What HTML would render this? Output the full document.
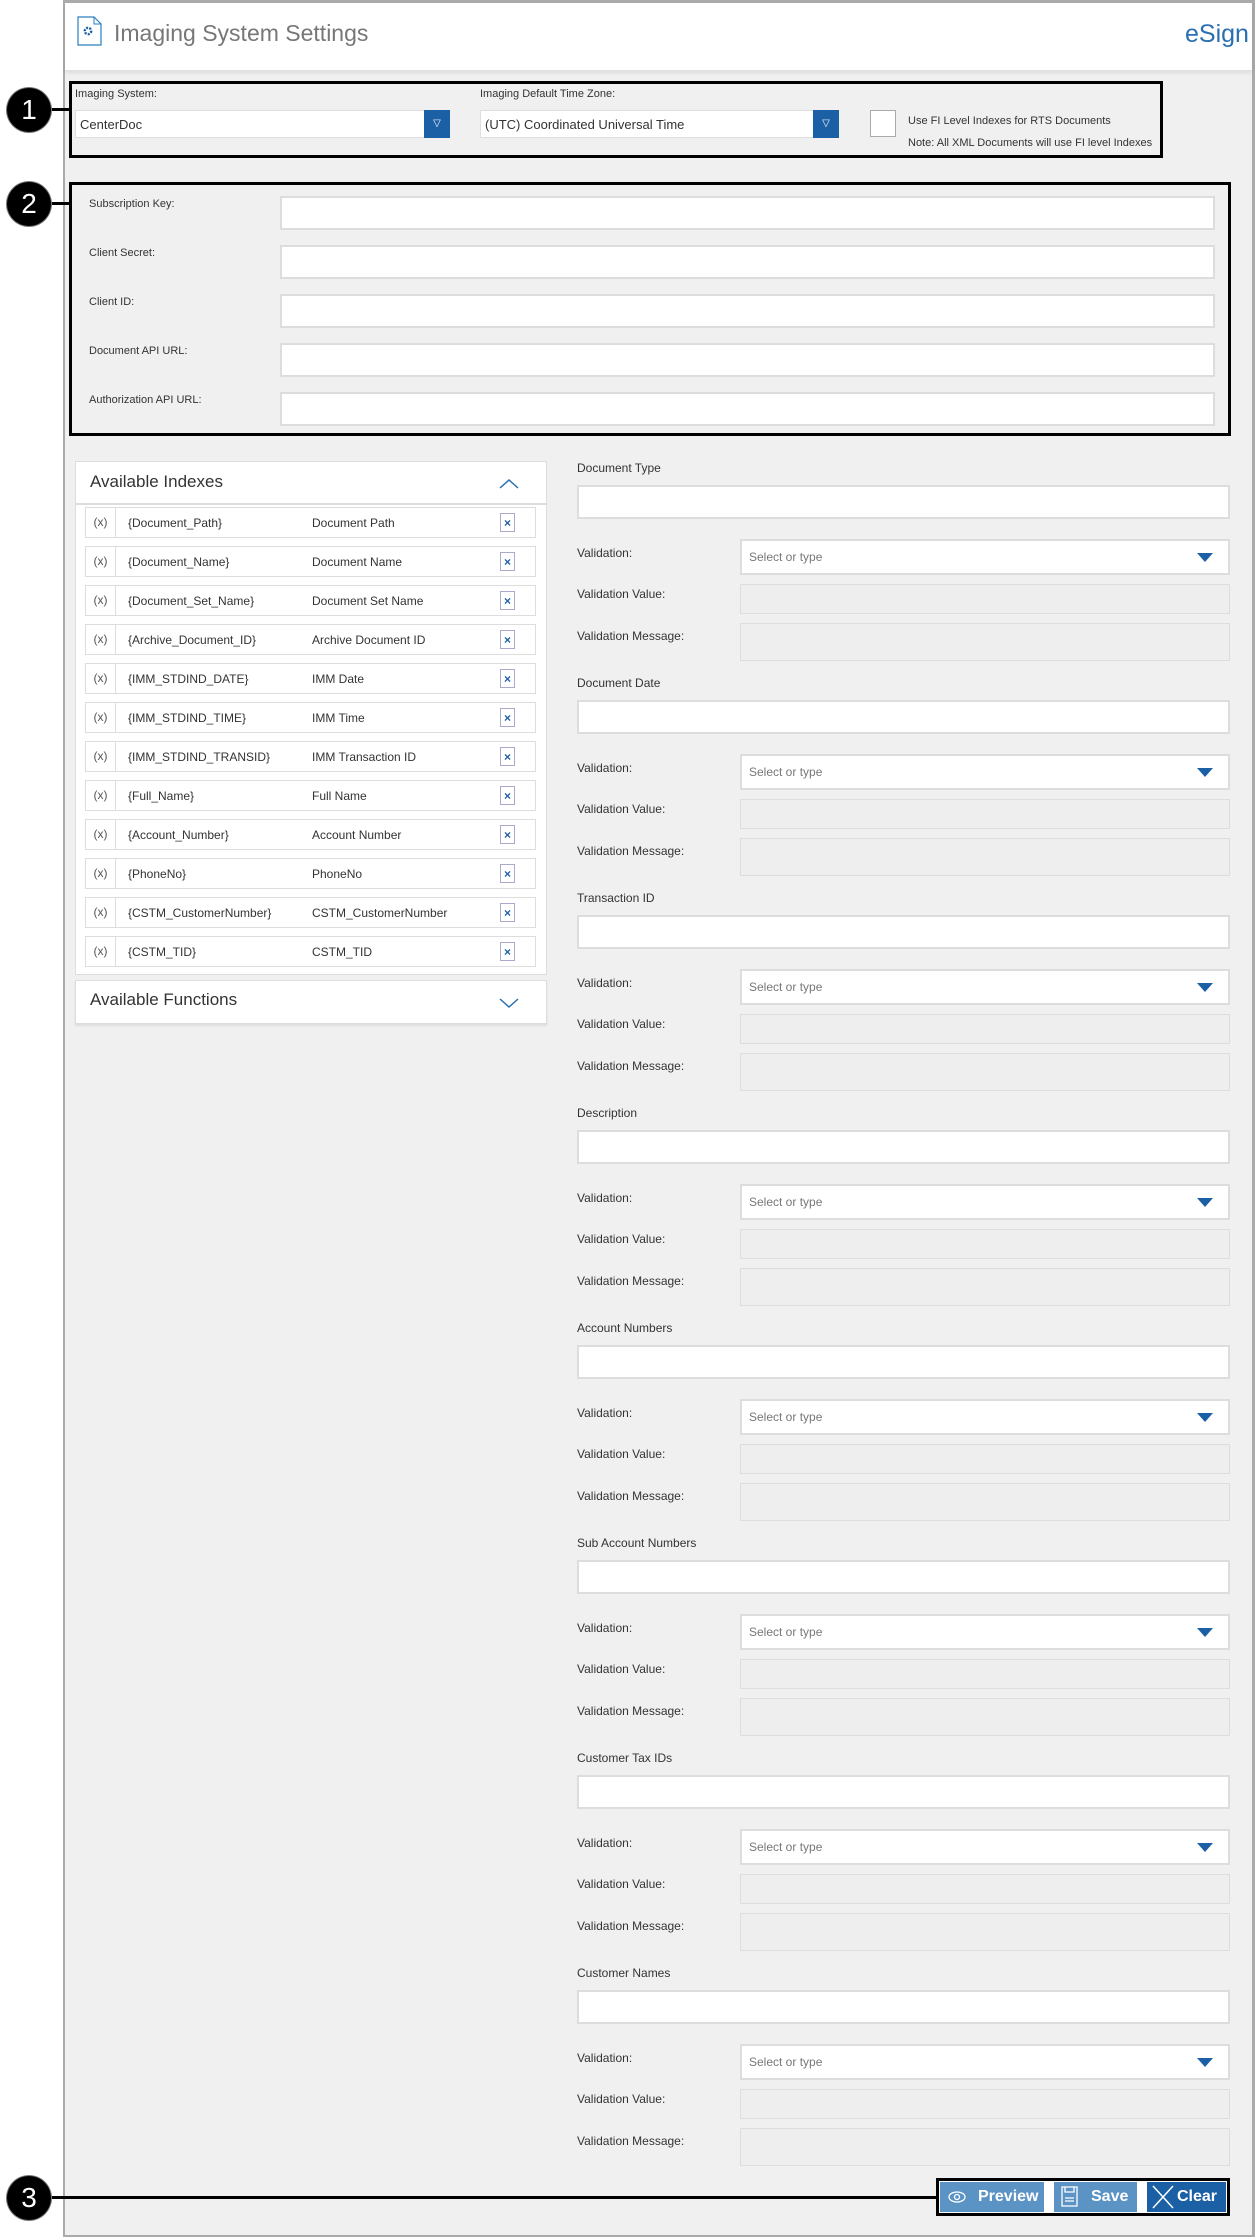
<!DOCTYPE html>
<html><head><meta charset="utf-8"><style>
*{box-sizing:border-box;margin:0;padding:0}
body{width:1255px;height:2237px;background:#fff;font-family:"Liberation Sans",sans-serif;position:relative;overflow:hidden;color:#333}
.a{position:absolute}
.page{left:63px;top:0;width:1192px;height:2237px;background:#f0f0f0;border:2px solid #aaa;border-right:3px solid #aaa;border-top:3px solid #aaa}
.hdr{left:65px;top:3px;width:1187px;height:67px;background:#fff;box-shadow:0 3px 4px rgba(0,0,0,.08)}
.lbl{font-size:12px;color:#333;white-space:nowrap}
.inp{background:#fff;border:2px solid #ddd}
.dis{background:#eee;border:1px solid #ddd}
.box{border:3px solid #000}
.circ{width:44px;height:44px;border-radius:50%;background:#000;color:#fff;font-size:28px;text-align:center;line-height:44px;box-shadow:0 0 0 1px #777}
.ln{height:3px;background:#000}
.row{left:85px;width:451px;height:31px;background:#fff;border:1px solid #ddd;font-size:12px;color:#333}
.row span{position:absolute;top:8px;white-space:nowrap}
.row .c{left:0;top:0;width:30px;height:29px;border-right:1px solid #ddd;text-align:center;line-height:29px;color:#555}
.ic{position:absolute;left:414px;top:5px;width:15px;height:19px;border:1px solid #aac;background:#fff;color:#1d5fa3;font-size:12px;font-weight:bold;text-align:center;line-height:19px}
.sec{left:577px;width:653px;height:200px}
.btn{top:2182px;height:30px;color:#fff;font-size:16px;line-height:30px;font-weight:bold}
</style></head><body>
<div class="a page"></div>
<div class="a hdr"></div>
<svg class="a" style="left:77px;top:16px" width="26" height="30" viewBox="0 0 26 30"><path d="M1 1H17L24 8V29H1Z" fill="#fff" stroke="#2a7fc0" stroke-width="1.2"/><path d="M17 1V8H24" fill="none" stroke="#2a7fc0" stroke-width="1"/><circle cx="11" cy="15" r="3.2" fill="none" stroke="#1d5fa3" stroke-width="2.4" stroke-dasharray="2 1.2"/></svg>
<div class="a" style="left:114px;top:20px;font-size:23px;color:#777">Imaging System Settings</div>
<div class="a" style="left:1185px;top:20px;font-size:25px;color:#2a6fb0">eSign</div>

<div class="a box" style="left:69px;top:81px;width:1094px;height:77px"></div>
<div class="a ln" style="left:40px;top:108px;width:30px"></div>
<div class="a circ" style="left:7px;top:88px">1</div>
<div class="a lbl" style="left:75px;top:88px;font-size:11px">Imaging System:</div>
<div class="a inp" style="left:75px;top:110px;width:375px;height:28px;border-width:1px"></div>
<div class="a lbl" style="left:80px;top:117px;font-size:13px">CenterDoc</div>
<div class="a" style="left:424px;top:110px;width:26px;height:28px;background:#1b5fa5;color:#fff;font-size:10px;text-align:center;line-height:28px">▽</div>
<div class="a lbl" style="left:480px;top:88px;font-size:11px">Imaging Default Time Zone:</div>
<div class="a inp" style="left:480px;top:110px;width:359px;height:28px;border-width:1px"></div>
<div class="a lbl" style="left:485px;top:117px;font-size:13px">(UTC) Coordinated Universal Time</div>
<div class="a" style="left:813px;top:110px;width:26px;height:28px;background:#1b5fa5;color:#fff;font-size:10px;text-align:center;line-height:28px">▽</div>
<div class="a inp" style="left:870px;top:110px;width:26px;height:27px;border:1px solid #aaa"></div>
<div class="a lbl" style="left:908px;top:115px;font-size:11px">Use FI Level Indexes for RTS Documents</div>
<div class="a lbl" style="left:908px;top:137px;font-size:11px">Note: All XML Documents will use FI level Indexes</div>

<div class="a box" style="left:69px;top:182px;width:1162px;height:254px"></div>
<div class="a ln" style="left:40px;top:202px;width:30px"></div>
<div class="a circ" style="left:7px;top:182px">2</div>
<div class="a lbl" style="left:89px;top:198px;font-size:11px">Subscription Key:</div>
<div class="a lbl" style="left:89px;top:247px;font-size:11px">Client Secret:</div>
<div class="a lbl" style="left:89px;top:296px;font-size:11px">Client ID:</div>
<div class="a lbl" style="left:89px;top:345px;font-size:11px">Document API URL:</div>
<div class="a lbl" style="left:89px;top:394px;font-size:11px">Authorization API URL:</div>
<div class="a inp" style="left:280px;top:196px;width:935px;height:34px"></div>
<div class="a inp" style="left:280px;top:245px;width:935px;height:34px"></div>
<div class="a inp" style="left:280px;top:294px;width:935px;height:34px"></div>
<div class="a inp" style="left:280px;top:343px;width:935px;height:34px"></div>
<div class="a inp" style="left:280px;top:392px;width:935px;height:34px"></div>

<div class="a" style="left:75px;top:461px;width:472px;height:514px;background:#fff;border:1px solid #ddd"></div>
<div class="a" style="left:75px;top:503px;width:472px;height:2px;background:#ddd"></div>
<div class="a" style="left:90px;top:472px;font-size:17px;color:#333">Available Indexes</div>
<svg class="a" style="left:499px;top:478px" width="20" height="12"><path d="M1 10L10 2L19 10" fill="none" stroke="#2a6fb0" stroke-width="1.5"/></svg>

<div class="a row" style="top:507px"><span class="c">(x)</span><span style="left:42px">{Document_Path}</span><span style="left:226px">Document Path</span><div class="ic">×</div></div>
<div class="a row" style="top:546px"><span class="c">(x)</span><span style="left:42px">{Document_Name}</span><span style="left:226px">Document Name</span><div class="ic">×</div></div>
<div class="a row" style="top:585px"><span class="c">(x)</span><span style="left:42px">{Document_Set_Name}</span><span style="left:226px">Document Set Name</span><div class="ic">×</div></div>
<div class="a row" style="top:624px"><span class="c">(x)</span><span style="left:42px">{Archive_Document_ID}</span><span style="left:226px">Archive Document ID</span><div class="ic">×</div></div>
<div class="a row" style="top:663px"><span class="c">(x)</span><span style="left:42px">{IMM_STDIND_DATE}</span><span style="left:226px">IMM Date</span><div class="ic">×</div></div>
<div class="a row" style="top:702px"><span class="c">(x)</span><span style="left:42px">{IMM_STDIND_TIME}</span><span style="left:226px">IMM Time</span><div class="ic">×</div></div>
<div class="a row" style="top:741px"><span class="c">(x)</span><span style="left:42px">{IMM_STDIND_TRANSID}</span><span style="left:226px">IMM Transaction ID</span><div class="ic">×</div></div>
<div class="a row" style="top:780px"><span class="c">(x)</span><span style="left:42px">{Full_Name}</span><span style="left:226px">Full Name</span><div class="ic">×</div></div>
<div class="a row" style="top:819px"><span class="c">(x)</span><span style="left:42px">{Account_Number}</span><span style="left:226px">Account Number</span><div class="ic">×</div></div>
<div class="a row" style="top:858px"><span class="c">(x)</span><span style="left:42px">{PhoneNo}</span><span style="left:226px">PhoneNo</span><div class="ic">×</div></div>
<div class="a row" style="top:897px"><span class="c">(x)</span><span style="left:42px">{CSTM_CustomerNumber}</span><span style="left:226px">CSTM_CustomerNumber</span><div class="ic">×</div></div>
<div class="a row" style="top:936px"><span class="c">(x)</span><span style="left:42px">{CSTM_TID}</span><span style="left:226px">CSTM_TID</span><div class="ic">×</div></div>

<div class="a" style="left:75px;top:980px;width:472px;height:44px;background:#fff;border:1px solid #ddd;box-shadow:0 2px 2px rgba(0,0,0,.08)"></div>
<div class="a" style="left:90px;top:990px;font-size:17px;color:#333">Available Functions</div>
<svg class="a" style="left:499px;top:997px" width="20" height="12"><path d="M1 2L10 10L19 2" fill="none" stroke="#2a6fb0" stroke-width="1.5"/></svg>

<div class="a sec" style="top:461px"><div class="a lbl" style="left:0;top:0">Document Type</div><div class="a inp" style="left:0;top:24px;width:653px;height:34px"></div><div class="a lbl" style="left:0;top:85px">Validation:</div><div class="a inp" style="left:163px;top:78px;width:490px;height:36px"></div><div class="a lbl" style="left:172px;top:89px;color:#777">Select or type</div><svg class="a" style="left:620px;top:92px" width="16" height="9"><path d="M0 0H16L8 9Z" fill="#1b5fa5"/></svg><div class="a lbl" style="left:0;top:126px">Validation Value:</div><div class="a dis" style="left:163px;top:123px;width:490px;height:30px"></div><div class="a lbl" style="left:0;top:168px">Validation Message:</div><div class="a dis" style="left:163px;top:162px;width:490px;height:38px"></div></div>
<div class="a sec" style="top:676px"><div class="a lbl" style="left:0;top:0">Document Date</div><div class="a inp" style="left:0;top:24px;width:653px;height:34px"></div><div class="a lbl" style="left:0;top:85px">Validation:</div><div class="a inp" style="left:163px;top:78px;width:490px;height:36px"></div><div class="a lbl" style="left:172px;top:89px;color:#777">Select or type</div><svg class="a" style="left:620px;top:92px" width="16" height="9"><path d="M0 0H16L8 9Z" fill="#1b5fa5"/></svg><div class="a lbl" style="left:0;top:126px">Validation Value:</div><div class="a dis" style="left:163px;top:123px;width:490px;height:30px"></div><div class="a lbl" style="left:0;top:168px">Validation Message:</div><div class="a dis" style="left:163px;top:162px;width:490px;height:38px"></div></div>
<div class="a sec" style="top:891px"><div class="a lbl" style="left:0;top:0">Transaction ID</div><div class="a inp" style="left:0;top:24px;width:653px;height:34px"></div><div class="a lbl" style="left:0;top:85px">Validation:</div><div class="a inp" style="left:163px;top:78px;width:490px;height:36px"></div><div class="a lbl" style="left:172px;top:89px;color:#777">Select or type</div><svg class="a" style="left:620px;top:92px" width="16" height="9"><path d="M0 0H16L8 9Z" fill="#1b5fa5"/></svg><div class="a lbl" style="left:0;top:126px">Validation Value:</div><div class="a dis" style="left:163px;top:123px;width:490px;height:30px"></div><div class="a lbl" style="left:0;top:168px">Validation Message:</div><div class="a dis" style="left:163px;top:162px;width:490px;height:38px"></div></div>
<div class="a sec" style="top:1106px"><div class="a lbl" style="left:0;top:0">Description</div><div class="a inp" style="left:0;top:24px;width:653px;height:34px"></div><div class="a lbl" style="left:0;top:85px">Validation:</div><div class="a inp" style="left:163px;top:78px;width:490px;height:36px"></div><div class="a lbl" style="left:172px;top:89px;color:#777">Select or type</div><svg class="a" style="left:620px;top:92px" width="16" height="9"><path d="M0 0H16L8 9Z" fill="#1b5fa5"/></svg><div class="a lbl" style="left:0;top:126px">Validation Value:</div><div class="a dis" style="left:163px;top:123px;width:490px;height:30px"></div><div class="a lbl" style="left:0;top:168px">Validation Message:</div><div class="a dis" style="left:163px;top:162px;width:490px;height:38px"></div></div>
<div class="a sec" style="top:1321px"><div class="a lbl" style="left:0;top:0">Account Numbers</div><div class="a inp" style="left:0;top:24px;width:653px;height:34px"></div><div class="a lbl" style="left:0;top:85px">Validation:</div><div class="a inp" style="left:163px;top:78px;width:490px;height:36px"></div><div class="a lbl" style="left:172px;top:89px;color:#777">Select or type</div><svg class="a" style="left:620px;top:92px" width="16" height="9"><path d="M0 0H16L8 9Z" fill="#1b5fa5"/></svg><div class="a lbl" style="left:0;top:126px">Validation Value:</div><div class="a dis" style="left:163px;top:123px;width:490px;height:30px"></div><div class="a lbl" style="left:0;top:168px">Validation Message:</div><div class="a dis" style="left:163px;top:162px;width:490px;height:38px"></div></div>
<div class="a sec" style="top:1536px"><div class="a lbl" style="left:0;top:0">Sub Account Numbers</div><div class="a inp" style="left:0;top:24px;width:653px;height:34px"></div><div class="a lbl" style="left:0;top:85px">Validation:</div><div class="a inp" style="left:163px;top:78px;width:490px;height:36px"></div><div class="a lbl" style="left:172px;top:89px;color:#777">Select or type</div><svg class="a" style="left:620px;top:92px" width="16" height="9"><path d="M0 0H16L8 9Z" fill="#1b5fa5"/></svg><div class="a lbl" style="left:0;top:126px">Validation Value:</div><div class="a dis" style="left:163px;top:123px;width:490px;height:30px"></div><div class="a lbl" style="left:0;top:168px">Validation Message:</div><div class="a dis" style="left:163px;top:162px;width:490px;height:38px"></div></div>
<div class="a sec" style="top:1751px"><div class="a lbl" style="left:0;top:0">Customer Tax IDs</div><div class="a inp" style="left:0;top:24px;width:653px;height:34px"></div><div class="a lbl" style="left:0;top:85px">Validation:</div><div class="a inp" style="left:163px;top:78px;width:490px;height:36px"></div><div class="a lbl" style="left:172px;top:89px;color:#777">Select or type</div><svg class="a" style="left:620px;top:92px" width="16" height="9"><path d="M0 0H16L8 9Z" fill="#1b5fa5"/></svg><div class="a lbl" style="left:0;top:126px">Validation Value:</div><div class="a dis" style="left:163px;top:123px;width:490px;height:30px"></div><div class="a lbl" style="left:0;top:168px">Validation Message:</div><div class="a dis" style="left:163px;top:162px;width:490px;height:38px"></div></div>
<div class="a sec" style="top:1966px"><div class="a lbl" style="left:0;top:0">Customer Names</div><div class="a inp" style="left:0;top:24px;width:653px;height:34px"></div><div class="a lbl" style="left:0;top:85px">Validation:</div><div class="a inp" style="left:163px;top:78px;width:490px;height:36px"></div><div class="a lbl" style="left:172px;top:89px;color:#777">Select or type</div><svg class="a" style="left:620px;top:92px" width="16" height="9"><path d="M0 0H16L8 9Z" fill="#1b5fa5"/></svg><div class="a lbl" style="left:0;top:126px">Validation Value:</div><div class="a dis" style="left:163px;top:123px;width:490px;height:30px"></div><div class="a lbl" style="left:0;top:168px">Validation Message:</div><div class="a dis" style="left:163px;top:162px;width:490px;height:38px"></div></div>

<div class="a box" style="left:936px;top:2178px;width:294px;height:38px;background:#fff"></div>
<div class="a ln" style="left:40px;top:2196px;width:897px"></div>
<div class="a circ" style="left:7px;top:2176px">3</div>
<div class="a btn" style="left:940px;width:104px;background:#5b93c4"><svg class="a" style="left:8px;top:8px" width="18" height="14"><ellipse cx="9" cy="7" rx="8" ry="5" fill="none" stroke="#fff" stroke-width="1.3"/><circle cx="9" cy="7" r="2.5" fill="none" stroke="#fff" stroke-width="1.3"/></svg><span class="a" style="left:38px;top:0">Preview</span></div>
<div class="a btn" style="left:1054px;width:83px;background:#5b93c4"><svg class="a" style="left:7px;top:4px" width="17" height="21"><path d="M1 1H16V20H1Z M4 12H13M4 15H13M4 1V6H13V1" fill="none" stroke="#fff" stroke-width="1.3"/></svg><span class="a" style="left:37px;top:0">Save</span></div>
<div class="a btn" style="left:1147px;width:79px;background:#1b5fa5"><svg class="a" style="left:5px;top:3px" width="22" height="24"><path d="M1 1L21 23M21 1L1 23" stroke="#fff" stroke-width="1.5"/></svg><span class="a" style="left:30px;top:0">Clear</span></div>
</body></html>
